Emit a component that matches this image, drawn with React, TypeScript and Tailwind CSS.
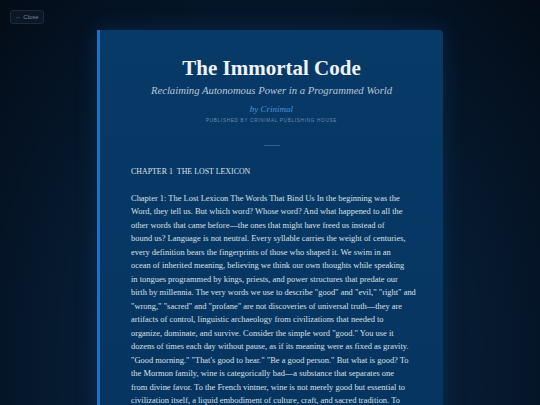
import React from "react";

const lines = [
  "Chapter 1: The Lost Lexicon The Words That Bind Us In the beginning was the",
  "Word, they tell us. But which word? Whose word? And what happened to all the",
  "other words that came before\u2014the ones that might have freed us instead of",
  "bound us? Language is not neutral. Every syllable carries the weight of centuries,",
  "every definition bears the fingerprints of those who shaped it. We swim in an",
  "ocean of inherited meaning, believing we think our own thoughts while speaking",
  "in tongues programmed by kings, priests, and power structures that predate our",
  "birth by millennia. The very words we use to describe \"good\" and \"evil,\" \"right\" and",
  "\"wrong,\" \"sacred\" and \"profane\" are not discoveries of universal truth\u2014they are",
  "artifacts of control, linguistic archaeology from civilizations that needed to",
  "organize, dominate, and survive. Consider the simple word \"good.\" You use it",
  "dozens of times each day without pause, as if its meaning were as fixed as gravity.",
  "\"Good morning.\" \"That's good to hear.\" \"Be a good person.\" But what is good? To",
  "the Mormon family, wine is categorically bad\u2014a substance that separates one",
  "from divine favor. To the French vintner, wine is not merely good but essential to",
  "civilization itself, a liquid embodiment of culture, craft, and sacred tradition. To",
];

export default function App() {
  return (
    <div className="relative h-[405px] w-[540px] overflow-hidden bg-[radial-gradient(ellipse_at_50%_90%,#0a2846_0%,#061a30_55%,#030c17_100%)] font-['Liberation_Serif',serif]">
      <button className="absolute left-[10px] top-[10px] flex h-[14px] w-[34px] items-center justify-center gap-[2px] rounded-[3px] border border-[#1c2a3a] bg-[#0b1724] font-['Liberation_Sans',sans-serif] text-[6px] text-[#7588a0]">
        <span>←</span>
        <span>Close</span>
      </button>

      <div className="mx-auto mt-[30px] w-[346px] rounded-r-[4px] border-l-[3px] border-[#1d72c8] bg-[linear-gradient(180deg,#083a67_0%,#063460_100%)] pb-10 shadow-[0_0_20px_2px_rgba(20,70,130,0.3)]">
        <div className="pt-[25px] text-center">
          <h1 className="text-[21px] font-bold leading-[26px] text-[#eef3f8]">The Immortal Code</h1>
          <p className="mt-[2px] text-[10.7px] italic leading-[14px] text-[#b9c8da]">
            Reclaiming Autonomous Power in a Programmed World
          </p>
          <p className="mt-[6px] text-[9px] italic leading-[12px] text-[#4c93dc]">by Crinimal</p>
          <p className="mt-[3px] font-['Liberation_Sans',sans-serif] text-[4.6px] uppercase leading-[6px] tracking-[0.16em] text-[#6a8db3]">
            Published by Crinimal Publishing House
          </p>
          <div className="mx-auto mt-[21px] h-px w-[16px] bg-[#28609a]" />
        </div>
        <div className="pl-[31px] pr-[30px]">
          <h2 className="mt-[20px] text-[7.9px] leading-[12px] text-[#dbe2ea]">CHAPTER 1&nbsp;&nbsp;THE LOST LEXICON</h2>
          <div className="mt-[14px] text-[8.45px] leading-[13.47px] text-[#dae0e8]">
            {lines.map((l, i) => (
              <div key={i} className="whitespace-nowrap">{l}</div>
            ))}
          </div>
        </div>
      </div>
    </div>
  );
}
